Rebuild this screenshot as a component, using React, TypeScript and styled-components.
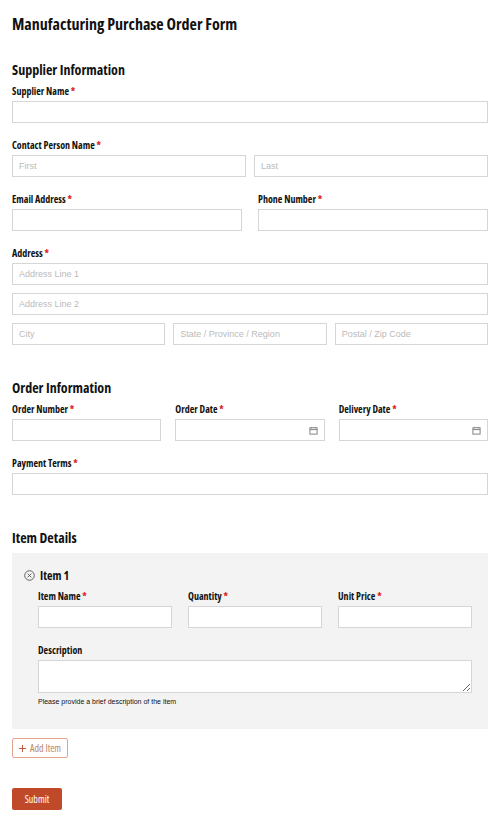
import styled, { createGlobalStyle } from "styled-components";

const Global = createGlobalStyle`
  body {
    margin: 0;
    background: #fff;
    font-family: "Open Sans", "Liberation Sans Narrow", sans-serif;
    font-stretch: 75%;
    color: #111;
  }
  * { box-sizing: border-box; }
`;

const Page = styled.form`
  padding: 14px 12px 12px;
  width: 500px;
`;

const Title = styled.h1`
  font-size: 16px;
  font-weight: 700;
  margin: 0 0 27px;
  line-height: 20px;
`;

const Section = styled.h2`
  font-size: 14px;
  font-weight: 700;
  margin: 0 0 6px;
  line-height: 18px;
`;

const Field = styled.div<{ gap?: number }>`
  margin-bottom: ${(p) => p.gap ?? 12}px;
`;

const Label = styled.label`
  display: block;
  font-size: 10px;
  font-weight: 700;
  line-height: 12px;
  margin-bottom: 4px;
  span { color: #d22; }
`;

const Input = styled.input`
  display: block;
  width: 100%;
  height: 22px;
  border: 1px solid #d6d6d6;
  background: #fff;
  padding: 0 6px;
  font-family: "Liberation Sans", Arial, sans-serif;
  font-size: 9px;
  &::placeholder { color: #bbb; }
`;

const Grid = styled.div<{ cols: string; gap: number }>`
  display: grid;
  grid-template-columns: ${(p) => p.cols};
  column-gap: ${(p) => p.gap}px;
`;

const Stack = styled.div`
  display: flex;
  flex-direction: column;
  gap: 8px;
`;

const DateBox = styled.div`
  height: 22px;
  border: 1px solid #d6d6d6;
  background: #fff;
  display: flex;
  align-items: center;
  justify-content: flex-end;
  padding-right: 6px;
`;

const Spacer = styled.div<{ h: number }>`
  height: ${(p) => p.h}px;
`;

const ItemBox = styled.div`
  background: #f3f3f3;
  padding: 14px 16px 24px 12px;
`;

const ItemHead = styled.div`
  display: flex;
  align-items: center;
  gap: 5px;
  font-size: 12px;
  font-weight: 700;
  margin-bottom: 6px;
`;

const ItemBody = styled.div`
  padding-left: 14px;
`;

const TextArea = styled.textarea`
  display: block;
  width: 100%;
  height: 33px;
  border: 1px solid #d6d6d6;
  resize: vertical;
`;

const Help = styled.div`
  font-family: "Liberation Sans", Arial, sans-serif;
  font-size: 7px;
  margin-top: 5px;
`;

const AddButton = styled.button`
  margin-top: 9px;
  height: 20px;
  padding: 0 6px 0 5px;
  border: 1px solid #e2a48c;
  border-radius: 2px;
  background: #fff;
  color: #b8866f;
  font-family: inherit;
  font-stretch: 75%;
  font-size: 10px;
  display: flex;
  align-items: center;
  gap: 3px;
`;

const Submit = styled.button`
  margin-top: 30px;
  height: 22px;
  width: 50px;
  border: none;
  border-radius: 2px;
  background: #c0492a;
  color: #fff;
  font-family: inherit;
  font-stretch: 75%;
  font-size: 10px;
`;

const Req = () => <span> *</span>;

const Cal = () => (
  <svg width="9" height="9" viewBox="0 0 10 10" fill="none" stroke="#777" strokeWidth="1">
    <rect x="1" y="2" width="8" height="7" />
    <line x1="1" y1="4" x2="9" y2="4" />
    <line x1="3" y1="1" x2="3" y2="2.5" />
    <line x1="7" y1="1" x2="7" y2="2.5" />
  </svg>
);

export default function App() {
  return (
    <>
      <Global />
      <Page>
        <Title>Manufacturing Purchase Order Form</Title>

        <Section>Supplier Information</Section>
        <Field gap={16}>
          <Label>Supplier Name<Req /></Label>
          <Input />
        </Field>
        <Field gap={16}>
          <Label>Contact Person Name<Req /></Label>
          <Grid cols="1fr 1fr" gap={8}>
            <Input placeholder="First" />
            <Input placeholder="Last" />
          </Grid>
        </Field>
        <Grid cols="1fr 1fr" gap={16}>
          <Field gap={16}>
            <Label>Email Address<Req /></Label>
            <Input />
          </Field>
          <Field gap={16}>
            <Label>Phone Number<Req /></Label>
            <Input />
          </Field>
        </Grid>
        <Field>
          <Label>Address<Req /></Label>
          <Stack>
            <Input placeholder="Address Line 1" />
            <Input placeholder="Address Line 2" />
            <Grid cols="1fr 1fr 1fr" gap={8}>
              <Input placeholder="City" />
              <Input placeholder="State / Province / Region" />
              <Input placeholder="Postal / Zip Code" />
            </Grid>
          </Stack>
        </Field>

        <Spacer h={22} />
        <Section>Order Information</Section>
        <Grid cols="1fr 1fr 1fr" gap={14}>
          <Field gap={16}>
            <Label>Order Number<Req /></Label>
            <Input />
          </Field>
          <Field gap={16}>
            <Label>Order Date<Req /></Label>
            <DateBox><Cal /></DateBox>
          </Field>
          <Field gap={16}>
            <Label>Delivery Date<Req /></Label>
            <DateBox><Cal /></DateBox>
          </Field>
        </Grid>
        <Field>
          <Label>Payment Terms<Req /></Label>
          <Input />
        </Field>

        <Spacer h={22} />
        <Section>Item Details</Section>
        <ItemBox>
          <ItemHead>
            <svg width="11" height="11" viewBox="0 0 12 12" fill="none" stroke="#555" strokeWidth="1">
              <circle cx="6" cy="6" r="5.2" />
              <path d="M4 4l4 4M8 4l-4 4" />
            </svg>
            Item 1
          </ItemHead>
          <ItemBody>
            <Grid cols="1fr 1fr 1fr" gap={16}>
              <Field gap={16}>
                <Label>Item Name<Req /></Label>
                <Input />
              </Field>
              <Field gap={16}>
                <Label>Quantity<Req /></Label>
                <Input />
              </Field>
              <Field gap={16}>
                <Label>Unit Price<Req /></Label>
                <Input />
              </Field>
            </Grid>
            <Label>Description</Label>
            <TextArea />
            <Help>Please provide a brief description of the item</Help>
          </ItemBody>
        </ItemBox>
        <AddButton type="button">
          <svg width="9" height="9" viewBox="0 0 10 10" stroke="#c0492a" strokeWidth="1">
            <path d="M5 1v8M1 5h8" />
          </svg>
          Add Item
        </AddButton>
        <Submit type="button">Submit</Submit>
      </Page>
    </>
  );
}
